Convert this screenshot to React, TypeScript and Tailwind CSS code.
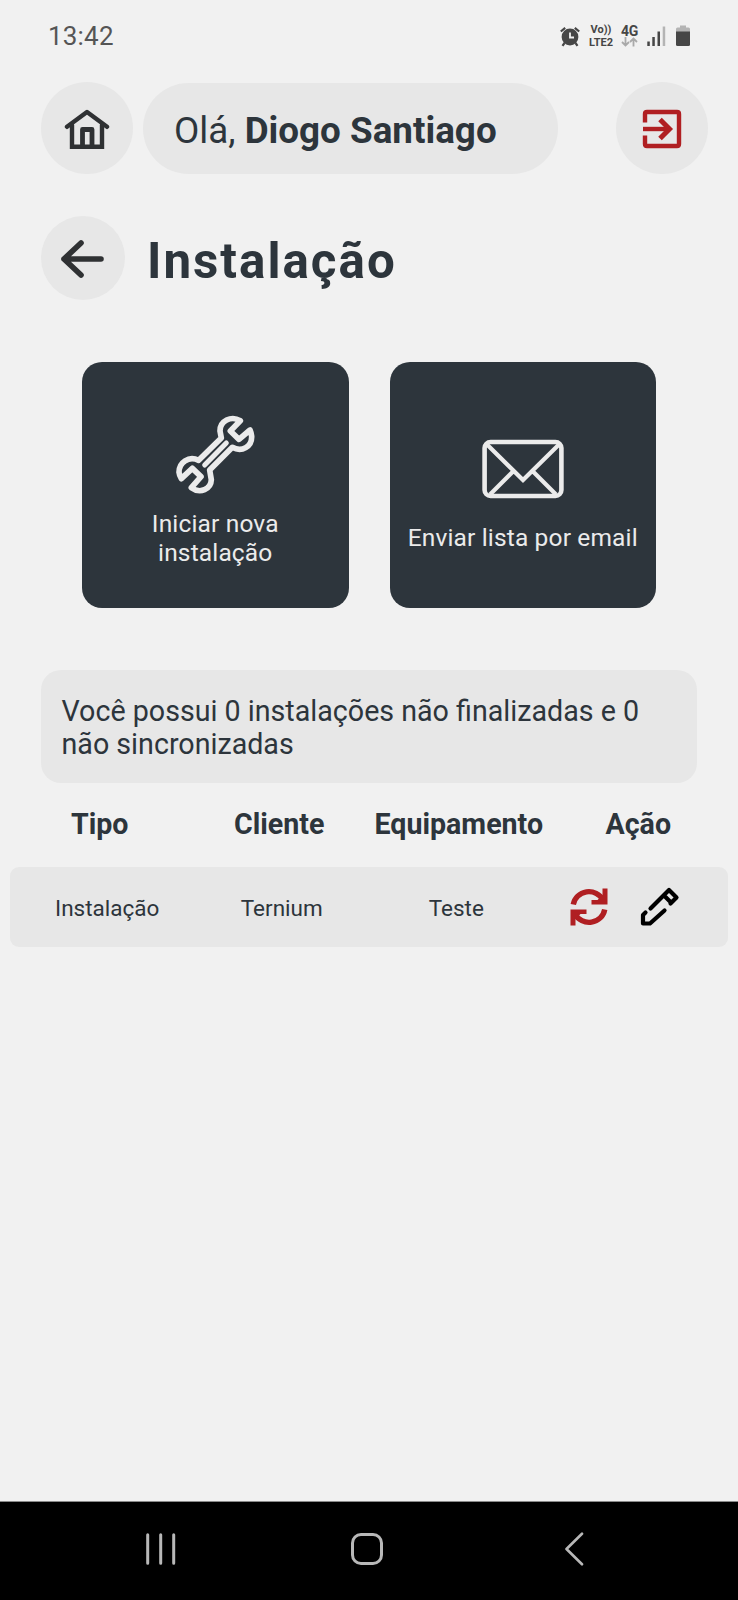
import type { ReactNode } from "react";

type Installation = {
  type: string;
  client: string;
  equipment: string;
};

const columns = ["Tipo", "Cliente", "Equipamento", "Ação"];

const installations: Installation[] = [
  { type: "Instalação", client: "Ternium", equipment: "Teste" },
];

function AlarmIcon() {
  return (
    <svg width="20" height="21" viewBox="0 0 20 21" fill="none">
      <circle cx="10" cy="11" r="8.4" fill="#464646" />
      <path d="M0.800 5.500L5.200 1.800M19.200 5.500L14.800 1.800M4.500 17L2.500 19.800M15.500 17l2 2.800" stroke="#464646" strokeWidth="2.200" />
      <path d="M10 6.500v5h4" stroke="#f1f1f1" strokeWidth="1.800" />
    </svg>
  );
}

function DataArrowsIcon() {
  return (
    <svg width="17" height="10" viewBox="0 0 17 10" fill="none" stroke="#a9a9a9" strokeWidth="1.800">
      <path d="M4.500 0v8.500M1 5l3.500 3.500L8 5M12.500 9.500v-8M9 5l3.500-3.500L16 5" />
    </svg>
  );
}

function SignalIcon() {
  return (
    <svg width="19" height="21" viewBox="0 0 19 21">
      <path d="M0.300 15.500h2.500v4.500h-2.500zM5.300 11h2.500v9h-2.500zM10.500 5.500h2.500v14.500h-2.500z" fill="#464646" />
      <path d="M15.700 0.500h2.500v19.500h-2.500z" fill="#b4b4b4" />
    </svg>
  );
}

function BatteryIcon() {
  return (
    <svg width="14" height="22" viewBox="0 0 14 22">
      <path d="M4 0.500h6v2h2.500q1.500 0 1.500 1.500v3h-14v-3q0-1.500 1.500-1.500h2.500z" fill="#b4b4b4" />
      <path d="M0 6.500h14v13q0 1.500-1.500 1.500h-11q-1.500 0-1.500-1.500z" fill="#464646" />
    </svg>
  );
}

function HomeIcon() {
  return (
    <svg className="mt-px" width="46" height="42" viewBox="0 0 46 42" fill="none" stroke="#2f3133" strokeWidth="4.400" strokeLinecap="round" strokeLinejoin="round">
      <path d="M3 18.800L23 4l20 14.800" />
      <path d="M8 17v21.700h30V17" strokeLinejoin="miter" />
      <path d="M18.500 38V21.500h9.500V38" strokeWidth="4.800" />
    </svg>
  );
}

function LogoutIcon() {
  return (
    <svg className="mt-0.5 -ml-px" width="40" height="40" viewBox="0 0 40 40" fill="none" stroke="#b01f22" strokeWidth="4.400">
      <path d="M3 13.500V5q0-2 2-2h30q2 0 2 2v30q0 2-2 2H5q-2 0-2-2v-8.500" />
      <path d="M1 20h25" />
      <path d="M18 10.500L27.500 20L18 29.500" strokeWidth="5" />
    </svg>
  );
}

function ArrowLeftIcon() {
  return (
    <svg className="mt-0.5 -ml-0.5" width="44" height="38" viewBox="0 0 44 38" fill="none" stroke="#2f3133" strokeWidth="5.600" strokeLinecap="round" strokeLinejoin="round">
      <path d="M41 19H4M21 3L4 19l17 16" />
    </svg>
  );
}

function WrenchIcon() {
  return (
    <svg width="80" height="80" viewBox="314 194 240 240" fill="none" stroke="#ebebeb" strokeWidth="17" strokeLinecap="round" strokeLinejoin="round">
      <path d="M510 211C482 195 449 212 449 242L453 263L385 330C355 316 326 336 326 366Q327 376 333 385L366 354L392 379L363 412C390 432 422 416 423 388L418 359L486 291C515 307 545 288 544 258Q543 248 539 239L506 267L480 242Z" />
      <path d="M468 278L403 344" strokeWidth="15" />
    </svg>
  );
}

function EnvelopeIcon() {
  return (
    <svg width="82" height="60" viewBox="0 0 82 60" fill="none" stroke="#ebebeb" strokeWidth="4.600" strokeLinejoin="miter">
      <rect x="2.600" y="3" width="76.800" height="54" rx="6" />
      <path d="M5 5.500L41 41L77 5.500M31.500 32L8 55.500M50.500 32L74 55.500" strokeWidth="4.200" />
    </svg>
  );
}

function SyncIcon() {
  return (
    <svg width="38" height="38" viewBox="0 0 38 38" fill="none" stroke="#b01f22" strokeWidth="5.400">
      <path d="M3.300 16.500A15.800 15.200 0 0 1 33 12" />
      <path d="M34.700 21.500A15.800 15.200 0 0 1 5 26" />
      <path d="M37.500 0.500V16.500H21.500V12H27.500L32.500 7V0.500Z" fill="#b01f22" stroke="none" />
      <path d="M0.500 37.500V21.500H16.500V26H10.500L5.500 31V37.500Z" fill="#b01f22" stroke="none" />
    </svg>
  );
}

function PencilIcon() {
  return (
    <svg width="40" height="40" viewBox="0 0 40 40" fill="none" stroke="#000" strokeWidth="4.200" strokeLinecap="round" strokeLinejoin="round">
      <path d="M10.500 21.500L29 3L36.500 10.500L30.500 16.500M24 8.500L31 15.500" />
      <path d="M24.500 23.500L10 36.500H3V28L5.500 25.500" />
    </svg>
  );
}

function ActionCard({ icon, label }: { icon: ReactNode; label: ReactNode }) {
  return (
    <button className="flex h-[246px] w-[266.500px] flex-col items-center justify-center rounded-[20px] bg-[#2d353c] pt-0.5 text-[#ebebeb]">
      <span className="flex size-[100px] items-center justify-center">{icon}</span>
      <span className="mt-[5px] text-[24.500px] leading-[28.700px] tracking-[0.150px] whitespace-nowrap">{label}</span>
    </button>
  );
}

export default function App() {
  return (
    <div className="flex h-[1600px] w-[738px] flex-col overflow-hidden bg-[#f1f1f1] font-[Roboto,sans-serif] text-[#2d353c]">
      {/* Status bar */}
      <div className="flex h-[72px] items-center justify-between pr-12 pl-12 text-[#464646]">
        <span className="text-[26px] leading-none tracking-[0.200px] text-[#555]">13:42</span>
        <div className="flex items-center">
          <AlarmIcon />
          <div className="ml-[7px] flex w-7 flex-col items-center text-[11px] leading-[13px] font-bold">
            <span>Vo))</span>
            <span>LTE2</span>
          </div>
          <div className="ml-1.5 flex flex-col items-center text-[14px] leading-[12px] font-bold">
            <span className="tracking-tight">4G</span>
            <DataArrowsIcon />
          </div>
          <div className="ml-[9px] flex items-center gap-2.5">
            <SignalIcon />
            <BatteryIcon />
          </div>
        </div>
      </div>

      {/* Greeting */}
      <header className="mt-2.5 flex items-center pr-[30px] pl-[41px]">
        <button className="flex size-[92px] items-center justify-center rounded-full bg-[#e7e7e7]">
          <HomeIcon />
        </button>
        <div className="ml-2.5 flex h-[91px] w-[415px] items-center rounded-full bg-[#e7e7e7] pt-1.5 pl-[31px] text-[36.800px]">
          <p>
            Olá, <strong className="font-bold">Diogo Santiago</strong>
          </p>
        </div>
        <button className="ml-auto flex size-[92px] items-center justify-center rounded-full bg-[#e7e7e7]">
          <LogoutIcon />
        </button>
      </header>

      <div className="mt-[42px] flex items-center pl-[41px]">
        <button className="flex size-[84px] items-center justify-center rounded-full bg-[#e7e7e7]">
          <ArrowLeftIcon />
        </button>
        <h1 className="mt-[7px] ml-[22px] text-[49.300px] leading-none font-bold tracking-[2px]">Instalação</h1>
      </div>

      <div className="mt-[62px] flex gap-[41px] px-[82px]">
        <ActionCard
          icon={<WrenchIcon />}
          label={
            <>
              Iniciar nova
              <br />
              instalação
            </>
          }
        />
        <ActionCard icon={<EnvelopeIcon />} label="Enviar lista por email" />
      </div>

      <p className="mx-[41px] mt-[62px] h-[113px] rounded-[20px] bg-[#e7e7e7] pt-[25px] pr-4 pl-[20.500px] text-[28.650px] leading-[33.400px]">
        Você possui 0 instalações não finalizadas e 0 não sincronizadas
      </p>

      {/* Installations table */}
      <div className="mt-[25px] grid grid-cols-4 px-2.5 text-center text-[28.600px] leading-[33px] font-bold">
        {columns.map((column) => (
          <span key={column}>{column}</span>
        ))}
      </div>
      {installations.map((item) => (
        <div
          key={item.client}
          className="mx-2.5 mt-[26px] grid h-[80px] grid-cols-4 items-center rounded-[9px] bg-[#e7e7e7] px-2.5 text-center text-[22.500px]"
        >
          <span className="pt-[3px]">{item.type}</span>
          <span className="pt-[3px]">{item.client}</span>
          <span className="pt-[3px]">{item.equipment}</span>
          <div className="flex items-center gap-8 pl-[26px]">
            <SyncIcon />
            <PencilIcon />
          </div>
        </div>
      ))}

      {/* Android navigation */}
      <nav className="mt-auto flex h-[99px] items-center border-t border-[#8a8a8a] bg-black pb-1">
        <svg className="ml-[146px]" width="30" height="32" viewBox="0 0 30 32" stroke="#b8b8b8" strokeWidth="3" strokeLinecap="round">
          <path d="M1.700 1.700v28.600M14.700 1.700v28.600M27.700 1.700v28.600" />
        </svg>
        <span className="ml-[175px] size-8 rounded-[10px] border-3 border-[#b8b8b8]" />
        <svg className="ml-[181px]" width="20" height="34" viewBox="0 0 20 34" fill="none" stroke="#b8b8b8" strokeWidth="2.600" strokeLinecap="round" strokeLinejoin="round">
          <path d="M18 1.700L2.500 17L18 32.300" />
        </svg>
      </nav>
    </div>
  );
}
